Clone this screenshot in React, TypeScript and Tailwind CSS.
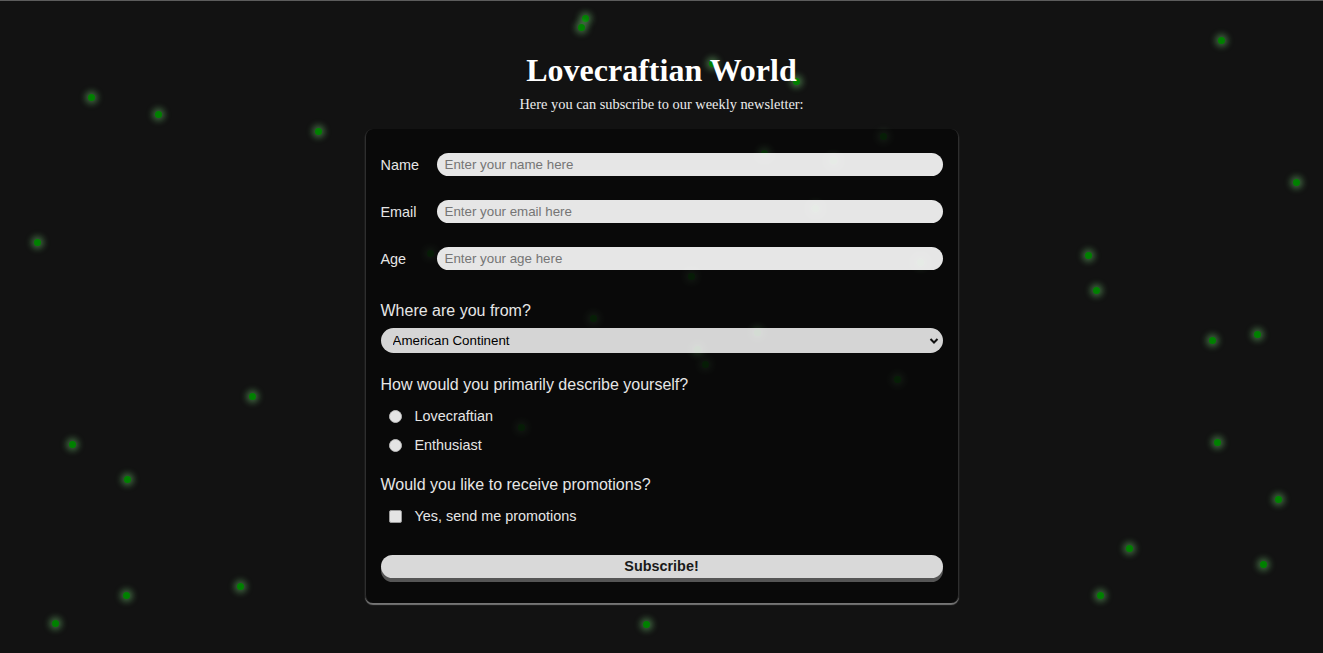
import React from "react";

const dots: [number, number, number][] = [
  [585, 18, 1], [581, 27, 1], [712, 63, 1], [796, 81, 1], [1221, 40, 1], [91, 97, 1],
  [158, 114, 1], [318, 131, 1], [883, 136, 0.35], [764, 153, 0.6], [833, 160, 0.8],
  [815, 208, 0.7], [920, 262, 0.7], [430, 253, 0.3], [1296, 182, 1], [37, 242, 1],
  [1088, 255, 1], [1096, 290, 1], [691, 276, 0.3], [593, 318, 0.35], [1212, 340, 1],
  [1257, 334, 1], [757, 332, 0.7], [697, 349, 0.7], [705, 364, 0.3], [897, 379, 0.35],
  [252, 396, 1], [521, 427, 0.3], [72, 444, 1], [1217, 442, 1], [127, 479, 1],
  [1278, 499, 1], [1129, 548, 1], [1263, 564, 1], [126, 595, 1], [240, 586, 1],
  [1100, 595, 1], [55, 623, 1], [646, 624, 1],
];

const font = { fontFamily: '"Liberation Sans", Arial, sans-serif' };

function Row({ label, placeholder }: { label: string; placeholder: string }) {
  return (
    <div className="flex items-center h-[23px]">
      <label className="w-[56px] text-[14.4px] leading-[18px] pt-[1px] text-[#e6e6e6]">{label}</label>
      <input
        className="flex-1 h-[23px] rounded-full bg-[rgba(255,255,255,0.9)] pl-[8px] text-[13.33px] text-black placeholder:text-[#757575] outline-none"
        placeholder={placeholder}
      />
    </div>
  );
}

export default function App() {
  return (
    <div
      className="relative w-full h-[653px] overflow-hidden bg-[#121212] border-t border-[#5c5c5c]"
      style={font}
    >
      <div className="absolute inset-0">
        {dots.map(([x, y, o], i) => (
          <span
            key={i}
            className="absolute w-[7px] h-[7px] rounded-full bg-[#008000] shadow-[0_0_6px_3px_rgba(130,225,130,0.4)]"
            style={{ left: x - 3.5, top: y - 4.5, opacity: o }}
          />
        ))}
      </div>
      <div className="relative z-10 flex flex-col items-center pt-[51px]">
        <h1
          className="text-[32px] leading-[37px] font-bold text-white"
          style={{ fontFamily: '"Liberation Serif", "Times New Roman", serif' }}
        >
          Lovecraftian World
        </h1>
        <p
          className="mt-[6px] text-[14.4px] leading-[18px] text-[#ececec]"
          style={{ fontFamily: '"Liberation Serif", "Times New Roman", serif' }}
        >
          Here you can subscribe to our weekly newsletter:
        </p>
        <form
          className="mt-[16px] w-[594px] rounded-[8px] bg-[rgba(0,0,0,0.45)] border-x border-[#2e2e2e] shadow-[0_2px_1px_rgba(170,170,170,0.65)] px-[15px] pt-[24px] pb-[25px] flex flex-col"
          onSubmit={(e) => e.preventDefault()}
        >
          <div className="flex flex-col gap-[24px]">
            <Row label="Name" placeholder="Enter your name here" />
            <Row label="Email" placeholder="Enter your email here" />
            <Row label="Age" placeholder="Enter your age here" />
          </div>
          <p className="mt-[32px] text-[16px] leading-[18px] text-[#e6e6e6]">Where are you from?</p>
          <div className="relative mt-[8px] h-[25px]">
            <select className="appearance-none w-full h-[25px] rounded-full bg-[rgba(255,255,255,0.83)] pl-[12px] pt-[1px] text-[13.33px] text-black outline-none">
              <option>American Continent</option>
            </select>
            <svg
              className="absolute right-[4px] top-[9px] pointer-events-none"
              width="10"
              height="8"
              viewBox="0 0 10 8"
            >
              <polyline points="1.5,2 5,5.5 8.5,2" fill="none" stroke="#111" strokeWidth="2" />
            </svg>
          </div>
          <p className="mt-[23px] text-[16px] leading-[18px] text-[#e6e6e6]">
            How would you primarily describe yourself?
          </p>
          <div className="mt-[12px] flex flex-col gap-[9px]">
            {["Lovecraftian", "Enthusiast"].map((t) => (
              <label key={t} className="flex items-center h-[20px] text-[14.4px] text-[#e6e6e6]">
                <span className="ml-[8px] w-[13px] h-[13px] rounded-full bg-[#e4e4e4] border border-[#bdbdbd]" />
                <span className="ml-[13px] pt-[1px]">{t}</span>
              </label>
            ))}
          </div>
          <p className="mt-[21px] text-[16px] leading-[18px] text-[#e6e6e6]">
            Would you like to receive promotions?
          </p>
          <label className="mt-[12px] flex items-center h-[20px] text-[14.4px] text-[#e6e6e6]">
            <span className="ml-[8px] w-[13px] h-[13px] rounded-[2px] bg-[#e4e4e4] border border-[#9a9a9a]" />
            <span className="ml-[13px] pt-[1px]">Yes, send me promotions</span>
          </label>
          <button
            type="submit"
            className="mt-[29px] h-[23px] rounded-full bg-[#d9d9d9] text-[14.4px] font-bold text-[#1a1a1a] shadow-[0_4px_0_#555555]"
          >
            Subscribe!
          </button>
        </form>
      </div>
    </div>
  );
}
